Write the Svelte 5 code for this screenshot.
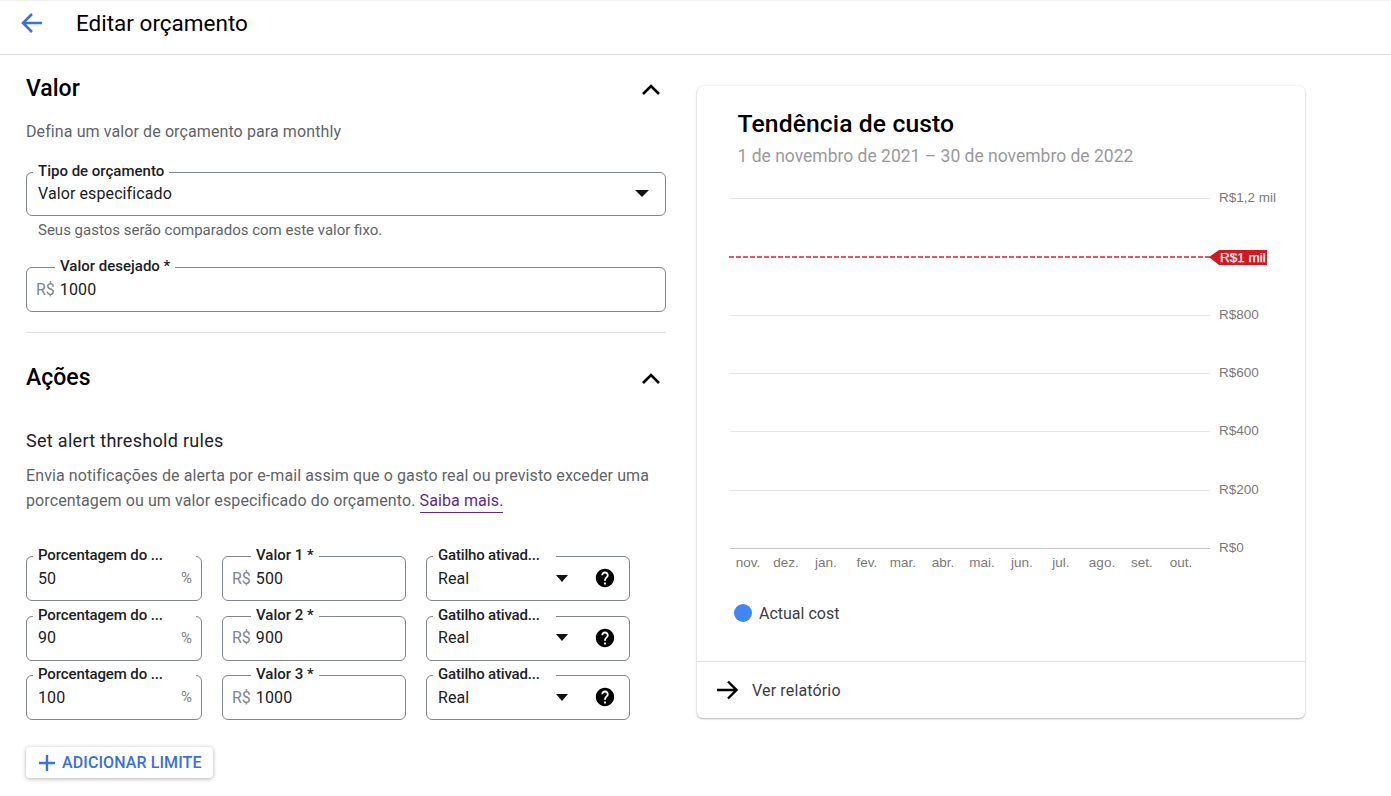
<script>
  const rows = [
    { pct: '50', n: 1, val: '500' },
    { pct: '90', n: 2, val: '900' },
    { pct: '100', n: 3, val: '1000' }
  ];
  const grid = [
    { y: 13, label: 'R$1,2 mil' },
    { y: 130, label: 'R$800' },
    { y: 188, label: 'R$600' },
    { y: 246, label: 'R$400' },
    { y: 305, label: 'R$200' }
  ];
  const months = [
    ['nov.', 51], ['dez.', 89], ['jan.', 129], ['fev.', 170], ['mar.', 206], ['abr.', 246],
    ['mai.', 285], ['jun.', 325], ['jul.', 364], ['ago.', 405], ['set.', 445], ['out.', 484]
  ];
</script>

<div class="page">
  <header class="top">
    <svg class="back" width="24" height="24" viewBox="0 0 24 24" fill="none" stroke="#3f6fd8" stroke-width="2.6">
      <path d="M22 12H3M12 3l-9 9 9 9" />
    </svg>
    <h1>Editar orçamento</h1>
  </header>

  <div class="content">
    <main class="form">
      <section class="valor">
        <div class="sec-head">
          <h2>Valor</h2>
          <svg class="chev" width="24" height="24" viewBox="0 0 24 24" fill="none" stroke="#000" stroke-width="2.6"><path d="M4 17l8-8 8 8" /></svg>
        </div>
        <p class="desc">Defina um valor de orçamento para monthly</p>

        <div class="field select-field">
          <span class="lbl">Tipo de orçamento</span>
          <span class="val">Valor especificado</span>
          <span class="caret big"></span>
        </div>
        <p class="hint">Seus gastos serão comparados com este valor fixo.</p>

        <div class="field money wide">
          <span class="lbl center-lbl">Valor desejado *</span>
          <span class="prefix">R$</span>
          <span class="val">1000</span>
        </div>
      </section>

      <hr class="divider" />

      <section class="acoes">
        <div class="sec-head">
          <h2>Ações</h2>
          <svg class="chev" width="24" height="24" viewBox="0 0 24 24" fill="none" stroke="#000" stroke-width="2.6"><path d="M4 17l8-8 8 8" /></svg>
        </div>
        <h3>Set alert threshold rules</h3>
        <p class="para">
          Envia notificações de alerta por e-mail assim que o gasto real ou previsto exceder uma
          porcentagem ou um valor especificado do orçamento. <a href="#saiba" class="link">Saiba mais.</a>
        </p>

        <div class="rules">
          {#each rows as r}
            <div class="field pct">
              <span class="lbl">Porcentagem do ...</span>
              <span class="val">{r.pct}</span>
              <span class="suffix">%</span>
            </div>
            <div class="field money">
              <span class="lbl center-lbl">Valor {r.n} *</span>
              <span class="prefix">R$</span>
              <span class="val">{r.val}</span>
            </div>
            <div class="field trig">
              <span class="lbl">Gatilho ativad...</span>
              <span class="val">Real</span>
              <span class="caret"></span>
              <svg class="help" width="22" height="22" viewBox="0 0 24 24" fill="#000"><path d="M12 2C6.48 2 2 6.48 2 12s4.48 10 10 10 10-4.48 10-10S17.52 2 12 2zm1 17h-2v-2h2v2zm2.07-7.75l-.9.92C13.45 12.9 13 13.5 13 15h-2v-.5c0-1.1.45-2.1 1.17-2.83l1.24-1.26c.37-.36.59-.86.59-1.41 0-1.1-.9-2-2-2s-2 .9-2 2H8c0-2.21 1.79-4 4-4s4 1.79 4 4c0 .88-.36 1.68-.93 2.25z" /></svg>
            </div>
          {/each}
        </div>

        <button class="add" type="button">
          <svg width="18" height="18" viewBox="0 0 18 18" fill="none" stroke="#3b6fd9" stroke-width="2.4"><path d="M9 1v16M1 9h16" /></svg>
          Adicionar limite
        </button>
      </section>
    </main>

    <aside class="card">
      <div class="card-head">
        <h2 class="card-title">Tendência de custo</h2>
        <p class="card-sub">1 de novembro de 2021 – 30 de novembro de 2022</p>
      </div>
      <svg class="chart" width="608" height="400" viewBox="0 0 608 400">
        {#each grid as g}
          <line x1="33" x2="513" y1={g.y + 0.5} y2={g.y + 0.5} stroke="#e6e6e6" />
          <text x="522" y={g.y + 4}>{g.label}</text>
        {/each}
        <line x1="33" x2="513" y1="363.5" y2="363.5" stroke="#c4c4c4" />
        <text x="522" y="367">R$0</text>
        <line x1="32" x2="513" y1="72" y2="72" stroke="#e02028" stroke-width="1.5" stroke-dasharray="5 2" />
        <polygon points="512,72 522,65 570,65 570,80 522,80" fill="#cf1a21" />
        <text class="tag" x="523" y="77">R$1 mil</text>
        {#each months as [m, x]}
          <text x={x} y="382" text-anchor="middle">{m}</text>
        {/each}
      </svg>
      <div class="legend">
        <span class="dot"></span>
        <span>Actual cost</span>
      </div>
      <div class="card-foot">
        <svg width="22" height="22" viewBox="0 0 22 22" fill="none" stroke="#000" stroke-width="2.4"><path d="M1 11h19M12 2.5l8.5 8.5-8.5 8.5" /></svg>
        <span class="foot-text">Ver relatório</span>
      </div>
    </aside>
  </div>
</div>

<style>
  :global(body) {
    margin: 0;
    background: #fff;
    overflow: hidden;
  }
  .page {
    font-family: Roboto, "Liberation Sans", sans-serif;
    color: #000;
    width: 1391px;
    height: 796px;
    overflow: hidden;
  }
  .top {
    box-sizing: border-box;
    height: 55px;
    border-top: 1px solid #f1f1f1;
    border-bottom: 1px solid #e0e0e0;
    display: flex;
    align-items: center;
    padding-left: 20px;
    padding-bottom: 9px;
  }
  .back {
    margin-right: 32px;
  }
  h1 {
    font-size: 22.5px;
    font-weight: 400;
    margin: 0;
    line-height: 28px;
  }
  .content {
    display: flex;
    align-items: flex-start;
    padding-left: 26px;
    gap: 31px;
  }
  .form {
    width: 640px;
    flex: none;
  }
  .sec-head {
    display: flex;
    align-items: center;
    justify-content: space-between;
    height: 28px;
  }
  .sec-head h2 {
    font-size: 23px;
    font-weight: 500;
    margin: 0;
    line-height: 28px;
  }
  .chev {
    margin-right: 3px;
  }
  .valor {
    padding-top: 20px;
  }
  .desc {
    margin: 19px 0 0;
    font-size: 16px;
    line-height: 20px;
    color: #5f6368;
    letter-spacing: 0.1px;
  }
  .field {
    position: relative;
    box-sizing: border-box;
    height: 44px;
    border: 1px solid #80868b;
    border-radius: 6px;
    display: flex;
    align-items: center;
    font-size: 16px;
    padding: 0 11px 1px;
  }
  .select-field {
    margin-top: 30px;
    justify-content: space-between;
    padding-right: 16px;
  }
  .lbl {
    position: absolute;
    top: -11px;
    left: 6px;
    background: #fff;
    padding: 0 5px;
    font-size: 15px;
    font-weight: 500;
    line-height: 18px;
    white-space: nowrap;
    color: #202124;
  }
  .val {
    letter-spacing: 0.1px;
    color: #202124;
  }
  .caret {
    width: 0;
    height: 0;
    border-left: 6.5px solid transparent;
    border-right: 6.5px solid transparent;
    border-top: 7px solid #111;
    display: block;
  }
  .caret.big {
    border-left-width: 7px;
    border-right-width: 7px;
  }
  .hint {
    margin: 4px 0 0 12px;
    font-size: 15px;
    line-height: 20px;
    color: #5f6368;
  }
  .wide {
    margin-top: 27px;
    height: 45px;
  }
  .money {
    padding: 0 9px 1px;
    gap: 5px;
  }
  .prefix, .suffix {
    color: #80868b;
  }
  .center-lbl {
    left: 28px;
  }
  .divider {
    border: 0;
    height: 1px;
    background: #e0e0e0;
    margin: 20px 0 0;
  }
  .acoes {
    padding-top: 31px;
  }
  h3 {
    font-size: 18px;
    font-weight: 400;
    letter-spacing: 0.3px;
    line-height: 24px;
    margin: 37px 0 0;
    color: #202124;
  }
  .para {
    margin: 10px 0 0;
    font-size: 16px;
    line-height: 25px;
    color: #5f6368;
    letter-spacing: 0.1px;
    width: 640px;
  }
  .link {
    color: #5f2b86;
    text-decoration: none;
    border-bottom: 1px solid #5f2b86;
    padding-bottom: 2px;
  }
  .rules {
    margin-top: 43px;
    display: grid;
    grid-template-columns: 176px 184px 204px;
    grid-auto-rows: 45px;
    column-gap: 20px;
    row-gap: 14.5px;
  }
  .rules .field {
    height: 45px;
  }
  .pct {
    justify-content: space-between;
    padding-right: 9px;
  }
  .pct .lbl {
    padding-right: 33px;
    letter-spacing: -0.12px;
  }
  .suffix {
    font-size: 15px;
  }
  .trig {
    padding-right: 13px;
  }
  .trig .lbl {
    padding-right: 16px;
    letter-spacing: -0.18px;
  }
  .trig .caret {
    margin-left: auto;
    margin-right: 26px;
  }
  .add {
    margin-top: 27px;
    height: 31px;
    width: 187px;
    box-sizing: border-box;
    border: 0;
    border-radius: 4px;
    background: #fff;
    box-shadow: 0 1px 4px rgba(0, 0, 0, 0.3);
    display: flex;
    align-items: center;
    gap: 6px;
    padding: 0 0 0 12px;
    font-family: inherit;
    font-size: 16px;
    font-weight: 500;
    letter-spacing: 0.1px;
    text-transform: uppercase;
    color: #3b6fd9;
  }
  .card {
    width: 608px;
    height: 632px;
    margin-top: 31px;
    flex: none;
    box-sizing: border-box;
    background: #fff;
    border-radius: 6px;
    box-shadow: 0 1px 2px rgba(0, 0, 0, 0.28), 0 0 3px rgba(0, 0, 0, 0.07);
    display: flex;
    flex-direction: column;
  }
  .card-head {
    padding: 22px 40.5px 0;
    height: 99px;
    box-sizing: border-box;
    white-space: nowrap;
  }
  .card-title {
    margin: 0;
    font-size: 24.7px;
    line-height: 32px;
    font-weight: 500;
    letter-spacing: 0.1px;
  }
  .card-sub {
    margin: 5px 0 0;
    font-size: 17.5px;
    line-height: 22px;
    color: #9a9a9a;
  }
  .chart {
    display: block;
    flex: none;
  }
  .chart text {
    font-family: "Liberation Sans", Arial, sans-serif;
    font-size: 13.5px;
    fill: #7a7a7a;
  }
  .chart text.tag {
    fill: #fff;
    stroke: #fff;
    stroke-width: 0.25px;
  }
  .legend {
    display: flex;
    align-items: center;
    gap: 7px;
    padding-left: 37px;
    font-size: 16px;
    color: #3c4043;
    height: 18px;
    margin-top: 19px;
  }
  .dot {
    width: 18px;
    height: 18px;
    border-radius: 50%;
    background: #4285f4;
  }
  .card-foot {
    margin-top: auto;
    height: 57px;
    box-sizing: border-box;
    border-top: 1px solid #e0e0e0;
    display: flex;
    align-items: center;
    padding-left: 19px;
    gap: 14px;
    font-size: 16px;
    color: #3c4043;
  }
  .foot-text {
    letter-spacing: 0.15px;
  }
</style>
